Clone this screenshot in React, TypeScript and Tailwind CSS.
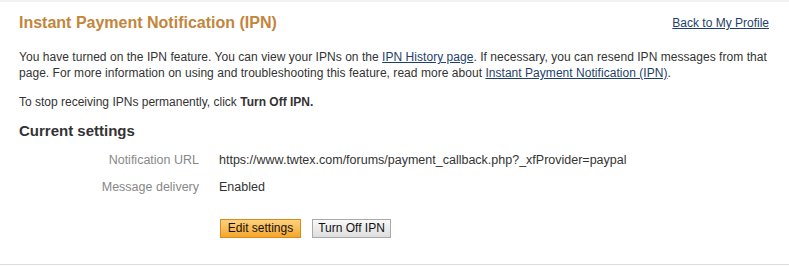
import React from "react";

export default function App() {
  return (
    <div className="w-[789px] h-[266px] bg-white border-t-2 border-[#f3f3f3] overflow-hidden" style={{ fontFamily: '"Liberation Sans", Arial, sans-serif' }}>
      <div className="px-[19px] pt-[11px] pb-[26px] border-b border-[#dcdcdc]">
        <div className="flex items-center justify-between">
          <h1 className="text-[16px] leading-[20px] font-bold text-[#c3853c]">Instant Payment Notification (IPN)</h1>
          <a href="#" className="text-[12px] leading-[20px] text-[#1f3f6b] underline mr-[1px]">Back to My Profile</a>
        </div>
        <p className="mt-[16px] text-[12px] leading-[16px] tracking-[0.04px] text-[#333]">
          You have turned on the IPN feature. You can view your IPNs on the{" "}
          <a href="#" className="text-[#1f3f6b] underline">IPN History page</a>. If necessary, you can resend IPN messages from that page. For more information on using and troubleshooting this feature, read more about{" "}
          <a href="#" className="text-[#1f3f6b] underline">Instant Payment Notification (IPN)</a>.
        </p>
        <p className="mt-[13px] text-[12px] leading-[16px] text-[#333]">
          To stop receiving IPNs permanently, click <span className="font-bold">Turn Off IPN.</span>
        </p>
        <h2 className="mt-[11px] text-[15px] leading-[19px] font-bold text-[#333]">Current settings</h2>
        <div className="mt-[12px] flex flex-col gap-[11px] text-[12.5px] leading-[16px]">
          <div className="flex">
            <div className="w-[180px] text-right text-[#888]">Notification URL</div>
            <div className="ml-[20px] text-[#333]">https://www.twtex.com/forums/payment_callback.php?_xfProvider=paypal</div>
          </div>
          <div className="flex">
            <div className="w-[180px] text-right text-[#888]">Message delivery</div>
            <div className="ml-[20px] text-[#333]">Enabled</div>
          </div>
        </div>
        <div className="mt-[24px] ml-[201px] flex gap-[11px]">
          <button className="w-[81px] h-[19px] text-[12px] leading-[17px] text-[#111] border border-[#d48c22] bg-gradient-to-b from-[#ffd27a] to-[#f5a623]">Edit settings</button>
          <button className="w-[79px] h-[19px] text-[12px] leading-[17px] text-[#111] border border-[#a9a9a9] bg-gradient-to-b from-[#f8f8f8] to-[#dedede]">Turn Off IPN</button>
        </div>
      </div>
    </div>
  );
}
